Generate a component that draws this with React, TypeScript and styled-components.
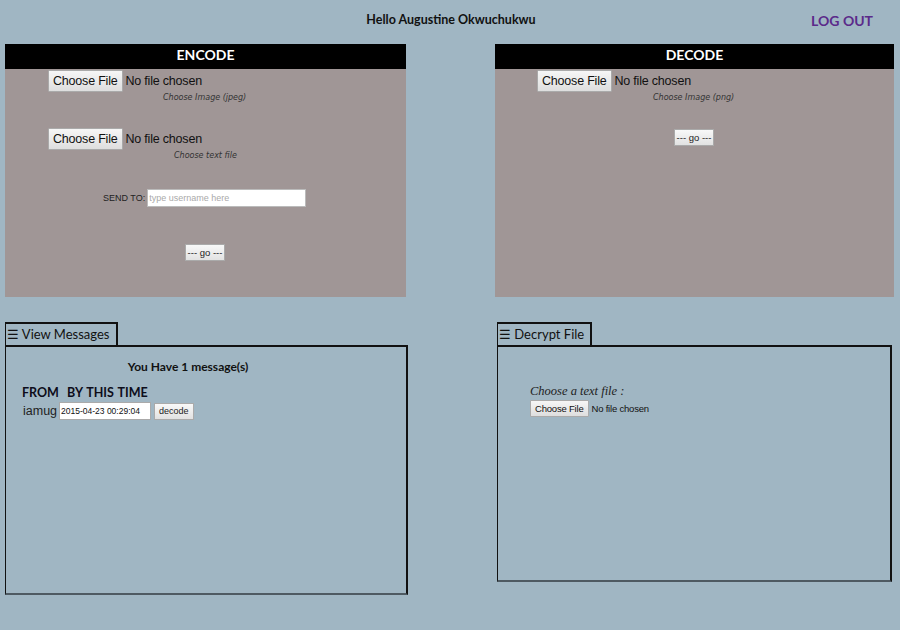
import React from "react";
import styled, { createGlobalStyle } from "styled-components";

const GlobalStyle = createGlobalStyle`
    html, body {
        margin: 0;
        padding: 0;
        background: #a0b6c3;
    }
    body {
        font-family: "Liberation Sans", Arial, sans-serif;
        color: #111;
    }
`;

const Page = styled.div`
    width: 900px;
    height: 630px;
    background: #a0b6c3;
    overflow: hidden;
`;

const Header = styled.div`
    height: 44px;
    display: flex;
    align-items: center;
    position: relative;
`;

const Greeting = styled.div`
    flex: 1;
    text-align: center;
    font-family: Lato, "Open Sans", sans-serif;
    font-weight: bold;
    font-size: 12.5px;
    padding-left: 2px;
    margin-top: -6px;
`;

const LogOut = styled.a`
    position: absolute;
    right: 27px;
    top: 12px;
    font-family: Lato, "Open Sans", sans-serif;
    font-weight: bold;
    font-size: 14px;
    color: #5b2a8a;
    text-decoration: none;
    cursor: pointer;
`;

const TopRow = styled.div`
    display: flex;
    padding-left: 5px;
    gap: 89px;
`;

const Panel = styled.div<{ $w: number }>`
    width: ${p => p.$w}px;
    height: 253px;
    background: #a09696;
`;

const PanelTitle = styled.div`
    height: 25px;
    background: #000;
    color: #fff;
    text-align: center;
    font-family: Lato, "Open Sans", sans-serif;
    font-weight: bold;
    font-size: 14px;
    line-height: 22px;
`;

const FileRow = styled.div<{ $left: number; $top: number }>`
    display: flex;
    align-items: center;
    margin: ${p => p.$top}px 0 0 ${p => p.$left}px;
    font-size: 12.5px;
    letter-spacing: -0.2px;
    color: #111;
`;

const FileButton = styled.button<{ $small?: boolean }>`
    font-family: "Liberation Sans", Arial, sans-serif;
    font-size: ${p => (p.$small ? "9.5px" : "12.5px")};
    letter-spacing: -0.2px;
    height: ${p => (p.$small ? "17px" : "22px")};
    padding: 0 4px;
    margin-right: 3px;
    background: linear-gradient(#f6f6f6, #dedede);
    border: 1px solid #aaa;
    border-radius: 1px;
    color: #111;
    line-height: 1;
`;

const Hint = styled.div<{ $left: number }>`
    margin: 1px 0 0 ${p => p.$left}px;
    font-family: "DejaVu Sans", Verdana, sans-serif;
    font-style: italic;
    font-size: 8px;
    color: #333;
`;

const SendRow = styled.div`
    display: flex;
    align-items: center;
    margin: 29px 0 0 98px;
    font-size: 9px;
    color: #222;
`;

const TextInput = styled.div`
    margin-left: 2px;
    width: 156px;
    height: 16px;
    background: #fff;
    border: 1px solid #bbb;
    color: #aaa;
    font-size: 9px;
    line-height: 16px;
    padding-left: 1px;
    box-sizing: content-box;
`;

const GoButton = styled.button<{ $left: number; $top: number }>`
    display: block;
    margin: ${p => p.$top}px 0 0 ${p => p.$left}px;
    width: 40px;
    height: 17px;
    padding: 0;
    font-family: "Liberation Sans", Arial, sans-serif;
    font-size: 9.5px;
    background: linear-gradient(#f8f8f8, #e2e2e2);
    border: 1px solid #aaa;
    color: #222;
`;

const BottomRow = styled.div`
    display: flex;
    padding-left: 5px;
    margin-top: 25px;
    gap: 89px;
`;

const Section = styled.div<{ $w: number }>`
    width: ${p => p.$w}px;
`;

const Tab = styled.div<{ $w: number }>`
    width: ${p => p.$w}px;
    height: 23px;
    box-sizing: border-box;
    border: 2px solid #111;
    border-left-width: 1px;
    border-bottom: none;
    font-family: Lato, "Open Sans", sans-serif;
    font-size: 13px;
    line-height: 21px;
    padding-left: 1px;
    white-space: nowrap;
    color: #111;
`;

const Box = styled.div<{ $h: number }>`
    height: ${p => p.$h}px;
    box-sizing: border-box;
    border: 2px solid #111;
    border-left-width: 1px;
    border-bottom-color: #4e5a62;
`;

const Count = styled.div`
    margin-top: 12px;
    text-align: center;
    font-family: Lato, "Open Sans", sans-serif;
    font-weight: bold;
    font-size: 12px;
    padding-right: 36px;
`;

const ColHead = styled.div`
    margin: 11px 0 0 16px;
    font-family: Lato, "Open Sans", sans-serif;
    font-weight: bold;
    font-size: 12.5px;
    word-spacing: 1px;
    color: #0d0d1a;
`;

const MsgRow = styled.div`
    display: flex;
    align-items: center;
    margin: 2px 0 0 17px;
    font-size: 12.5px;
    color: #222;
`;

const DateField = styled.div`
    margin-left: 2px;
    width: 89px;
    height: 16px;
    background: #fff;
    border: 1px solid #aaa;
    font-size: 8.5px;
    line-height: 16px;
    padding-left: 1px;
    color: #111;
`;

const SmallButton = styled.button`
    margin-left: 3px;
    height: 17px;
    padding: 0 4px;
    font-family: "Liberation Sans", Arial, sans-serif;
    font-size: 9px;
    background: linear-gradient(#f8f8f8, #e2e2e2);
    border: 1px solid #aaa;
    color: #222;
`;

const DecryptLabel = styled.div`
    margin: 37px 0 0 32px;
    font-family: "Liberation Serif", "Times New Roman", serif;
    font-style: italic;
    font-size: 12.5px;
    color: #222;
`;

const SmallFileRow = styled.div`
    display: flex;
    align-items: center;
    margin: 1px 0 0 32px;
    font-size: 9.5px;
    letter-spacing: -0.2px;
    color: #111;
`;

export default function App() {
    return (
        <Page>
            <GlobalStyle />
            <Header>
                <Greeting>Hello Augustine Okwuchukwu</Greeting>
                <LogOut>LOG OUT</LogOut>
            </Header>

            <TopRow>
                <Panel $w={401}>
                    <PanelTitle>ENCODE</PanelTitle>
                    <FileRow $left={43} $top={1}>
                        <FileButton>Choose File</FileButton>
                        No file chosen
                    </FileRow>
                    <Hint $left={158}>Choose Image (jpeg)</Hint>
                    <FileRow $left={43} $top={26}>
                        <FileButton>Choose File</FileButton>
                        No file chosen
                    </FileRow>
                    <Hint $left={169}>Choose text file</Hint>
                    <SendRow>
                        SEND TO:
                        <TextInput>type username here</TextInput>
                    </SendRow>
                    <GoButton $left={180} $top={37}>--- go ---</GoButton>
                </Panel>
                <Panel $w={399}>
                    <PanelTitle>DECODE</PanelTitle>
                    <FileRow $left={42} $top={1}>
                        <FileButton>Choose File</FileButton>
                        No file chosen
                    </FileRow>
                    <Hint $left={158}>Choose Image (png)</Hint>
                    <GoButton $left={179} $top={27}>--- go ---</GoButton>
                </Panel>
            </TopRow>

            <BottomRow>
                <Section $w={403}>
                    <Tab $w={113}>☰ View Messages</Tab>
                    <Box $h={250}>
                        <Count>You Have 1 message(s)</Count>
                        <ColHead>FROM&nbsp; BY THIS TIME</ColHead>
                        <MsgRow>
                            iamug
                            <DateField>2015-04-23 00:29:04</DateField>
                            <SmallButton>decode</SmallButton>
                        </MsgRow>
                    </Box>
                </Section>
                <Section $w={395}>
                    <Tab $w={95}>☰ Decrypt File</Tab>
                    <Box $h={237}>
                        <DecryptLabel>Choose a text file :</DecryptLabel>
                        <SmallFileRow>
                            <FileButton $small>Choose File</FileButton>
                            No file chosen
                        </SmallFileRow>
                    </Box>
                </Section>
            </BottomRow>
        </Page>
    );
}
